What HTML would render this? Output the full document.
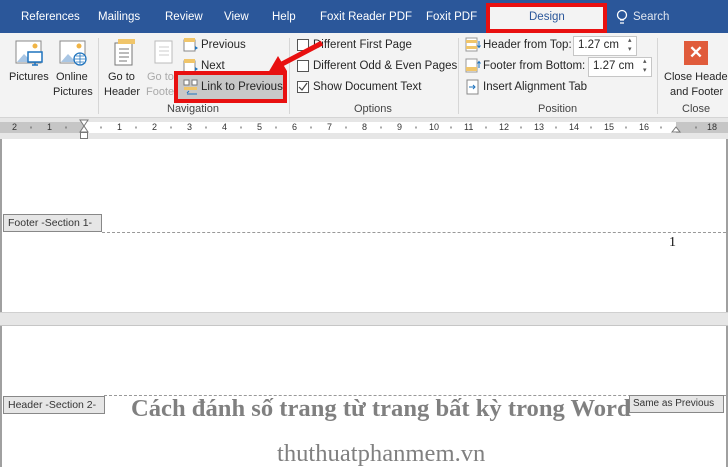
<!DOCTYPE html>
<html><head><meta charset="utf-8"><style>
*{margin:0;padding:0;box-sizing:border-box}
body{width:728px;height:467px;overflow:hidden;position:relative;background:#fff;font-family:"Liberation Sans",sans-serif;font-size:11px;color:#262626}
.a{position:absolute;white-space:nowrap}
.tab{color:#fff;font-size:11.5px;top:11px}
.lbl{color:#444;font-size:11px;top:103px}
.sep{position:absolute;top:38px;width:1px;height:76px;background:#d6d6d6}
.cb{position:absolute;width:12px;height:12px;border:1px solid #555;background:#fff}
.inp{position:absolute;height:20px;background:#fff;border:1px solid #c6c6c6;font-size:11.5px;padding:2px 4px}
.rn{position:absolute;top:122px;font-size:9px;color:#333}
.tag{position:absolute;white-space:nowrap;overflow:hidden;background:#e6e6e6;border:1px solid #888;font-size:10.5px;color:#333;padding:2px 4px;height:18px}
</style></head><body>
<div class="a" style="left:0;top:0;width:728px;height:33px;background:#2b579a"></div>
<div class="a tab" style="left:21px">References</div>
<div class="a tab" style="left:98px">Mailings</div>
<div class="a tab" style="left:165px">Review</div>
<div class="a tab" style="left:224px">View</div>
<div class="a tab" style="left:272px">Help</div>
<div class="a tab" style="left:320px">Foxit Reader PDF</div>
<div class="a tab" style="left:426px">Foxit PDF</div>
<div class="a" style="left:486px;top:3px;width:121px;height:30px;border:4px solid #e81010;background:#f3f3f3"></div>
<div class="a" style="left:529px;top:11px;color:#2b579a;font-size:11.5px">Design</div>
<svg class="a" style="left:615px;top:9px" width="14" height="18"><circle cx="7" cy="6" r="4.5" fill="none" stroke="#fff" stroke-width="1.3"/><path d="M5 11h4M5 14h4" stroke="#fff" stroke-width="1.3"/></svg>
<div class="a tab" style="left:633px;color:#e0e6f0">Search</div>

<div class="a" style="left:0;top:33px;width:728px;height:85px;background:#f3f3f3;border-bottom:1px solid #d4d4d4"></div>
<svg class="a" style="left:15px;top:40px" width="30" height="28"><rect x="1" y="1" width="25" height="22" fill="#fff" stroke="#888"/><path d="M2 22l7-8 8 8z" fill="#a9c6e4"/><circle cx="20" cy="6" r="2.5" fill="#f0b445"/><rect x="13" y="12" width="14" height="10" fill="#fff" stroke="#1e73be" stroke-width="1.5"/><path d="M17 25h6M20 22v3" stroke="#1e73be" stroke-width="1.5"/></svg>
<div class="a" style="left:9px;top:71px;font-size:11px">Pictures</div>
<svg class="a" style="left:59px;top:40px" width="30" height="28"><rect x="1" y="1" width="25" height="22" fill="#fff" stroke="#888"/><path d="M2 22l7-8 8 8z" fill="#a9c6e4"/><circle cx="20" cy="6" r="2.5" fill="#f0b445"/><circle cx="21" cy="19" r="6" fill="#fff" stroke="#1e73be" stroke-width="1.3"/><path d="M15 19h12M21 13v12M17 16h8M17 22h8" stroke="#1e73be" stroke-width=".8"/></svg>
<div class="a" style="left:56px;top:71px">Online</div>
<div class="a" style="left:53px;top:86px">Pictures</div>
<div class="sep" style="left:98px"></div>
<svg class="a" style="left:112px;top:38px" width="24" height="30"><rect x="3" y="5" width="17" height="22" fill="#fff" stroke="#777"/><rect x="6" y="1" width="17" height="5" fill="#f0c56a"/><path d="M7 11h10M7 15h10M7 19h10M7 23h8" stroke="#777"/></svg>
<div class="a" style="left:108px;top:71px">Go to</div>
<div class="a" style="left:104px;top:86px">Header</div>
<svg class="a" style="left:152px;top:38px" width="24" height="30"><rect x="3" y="3" width="17" height="22" fill="#fff" stroke="#bbb"/><path d="M7 9h10M7 13h10M7 17h10" stroke="#ccc"/></svg>
<div class="a" style="left:147px;top:71px;color:#aaa">Go to</div>
<div class="a" style="left:146px;top:86px;color:#aaa">Footer</div>
<svg class="a" style="left:183px;top:37px" width="16" height="16"><rect x="1" y="3" width="11" height="11" fill="#fff" stroke="#888"/><rect x="1" y="1" width="11" height="4" fill="#f0c56a"/><path d="M15 11l-3 -2v4z" fill="#1e73be"/></svg>
<div class="a" style="left:201px;top:39px;font-size:11.5px">Previous</div>
<svg class="a" style="left:183px;top:58px" width="16" height="16"><rect x="1" y="3" width="11" height="11" fill="#fff" stroke="#888"/><rect x="1" y="1" width="11" height="4" fill="#f0c56a"/><path d="M15 11l-3 -2v4z" fill="#1e73be"/></svg>
<div class="a" style="left:201px;top:60px;font-size:11.5px">Next</div>
<div class="a" style="left:174px;top:71px;width:113px;height:32px;border:4px solid #e81010;background:#c8c8c8"></div>
<svg class="a" style="left:183px;top:79px" width="16" height="16"><rect x="1" y="1" width="5" height="5" fill="#fff" stroke="#777"/><rect x="9" y="1" width="5" height="5" fill="#fff" stroke="#777"/><rect x="1" y="8" width="13" height="3" fill="#f0c56a"/><path d="M4 15h10M6 12l-2 2" stroke="#1e73be"/></svg>
<div class="a" style="left:201px;top:81px;font-size:11.5px">Link to Previous</div>
<div class="a lbl" style="left:167px">Navigation</div>
<div class="sep" style="left:289px"></div>
<div class="cb" style="left:297px;top:39px"></div>
<div class="a" style="left:313px;top:39px;font-size:11.5px">Different First Page</div>
<div class="cb" style="left:297px;top:60px"></div>
<div class="a" style="left:313px;top:60px;font-size:11.5px">Different Odd &amp; Even Pages</div>
<div class="cb" style="left:297px;top:81px"><svg width="10" height="10" style="position:absolute;left:0;top:0"><path d="M1 5l3 3 5-7" fill="none" stroke="#444" stroke-width="1.2"/></svg></div>
<div class="a" style="left:313px;top:81px;font-size:11.5px">Show Document Text</div>
<div class="a lbl" style="left:354px">Options</div>
<div class="sep" style="left:458px"></div>
<svg class="a" style="left:465px;top:37px" width="16" height="16"><rect x="1" y="1" width="11" height="13" fill="#fff" stroke="#999"/><rect x="1" y="3" width="11" height="3" fill="#f0c56a"/><rect x="1" y="9" width="11" height="3" fill="#f0c56a"/><path d="M14 4v6M12.5 8.5l1.5 2 1.5-2" stroke="#1e73be" fill="none"/></svg>
<div class="a" style="left:483px;top:39px;font-size:11.5px">Header from Top:</div>
<div class="inp" style="left:573px;top:36px;width:64px">1.27 cm</div>
<svg class="a" style="left:465px;top:58px" width="16" height="16"><rect x="1" y="1" width="11" height="13" fill="#fff" stroke="#999"/><rect x="1" y="9" width="11" height="4" fill="#f0c56a"/><path d="M14 10V4M12.5 5.5l1.5-2 1.5 2" stroke="#1e73be" fill="none"/></svg>
<div class="a" style="left:483px;top:60px;font-size:11.5px">Footer from Bottom:</div>
<div class="inp" style="left:588px;top:57px;width:64px">1.27 cm</div>
<div class="a" style="left:628px;top:36px;font-size:7px;color:#555;line-height:9px">▴<br>▾</div>
<div class="a" style="left:643px;top:57px;font-size:7px;color:#555;line-height:9px">▴<br>▾</div>
<svg class="a" style="left:465px;top:79px" width="16" height="16"><rect x="2" y="1" width="11" height="14" fill="#fff" stroke="#888"/><path d="M4 8h6M8 6l2 2-2 2" stroke="#1e73be" fill="none"/></svg>
<div class="a" style="left:483px;top:81px;font-size:11.5px">Insert Alignment Tab</div>
<div class="a lbl" style="left:538px">Position</div>
<div class="sep" style="left:657px"></div>
<div class="a" style="left:684px;top:41px;width:24px;height:24px;background:#e05b3b;color:#fff;font-size:17px;font-weight:bold;text-align:center;line-height:24px">✕</div>
<div class="a" style="left:664px;top:71px">Close Header</div>
<div class="a" style="left:670px;top:86px">and Footer</div>
<div class="a lbl" style="left:682px">Close</div>

<svg class="a" style="left:0;top:0" width="728" height="120"><path d="M322 43L282 64" stroke="#e81010" stroke-width="5"/><path d="M268 73l10-17 9 15z" fill="#e81010"/></svg>

<div class="a" style="left:0;top:118px;width:728px;height:21px;background:#e6e6e6"></div>
<div class="a" style="left:0;top:122px;width:84px;height:11px;background:#c6c6c6"></div>
<div class="a" style="left:84px;top:122px;width:592px;height:11px;background:#fff"></div>
<div class="a" style="left:676px;top:122px;width:52px;height:11px;background:#c6c6c6"></div>
<div class="rn" style="left:12px">2</div><div class="rn" style="left:47px">1</div>
<div class="rn" style="left:117px">1</div><div class="rn" style="left:152px">2</div><div class="rn" style="left:187px">3</div><div class="rn" style="left:222px">4</div><div class="rn" style="left:257px">5</div><div class="rn" style="left:292px">6</div><div class="rn" style="left:327px">7</div><div class="rn" style="left:362px">8</div><div class="rn" style="left:397px">9</div><div class="rn" style="left:429px">10</div><div class="rn" style="left:464px">11</div><div class="rn" style="left:499px">12</div><div class="rn" style="left:534px">13</div><div class="rn" style="left:569px">14</div><div class="rn" style="left:604px">15</div><div class="rn" style="left:639px">16</div><div class="rn" style="left:707px">18</div>
<svg class="a" style="left:0;top:118px" width="728" height="22"><g stroke="#555" stroke-width="1">
<path d="M31 126.5v2M66 126.5v2M101 126.5v2M136 126.5v2M171 126.5v2M206 126.5v2M241 126.5v2M276 126.5v2M311 126.5v2M346 126.5v2M381 126.5v2M416 126.5v2M451 126.5v2M486 126.5v2M521 126.5v2M556 126.5v2M591 126.5v2M626 126.5v2M661 126.5v2M696 126.5v2" transform="translate(0,-118)"/></g>
<path d="M80 2h8l-4 6zM80 14h8l-4-6z" fill="#fff" stroke="#777"/><rect x="80.5" y="14.5" width="7" height="6" fill="#fff" stroke="#777"/><path d="M672 14l4-5 4 5z" fill="#fff" stroke="#777"/></svg>

<div class="a" style="left:0;top:139px;width:2px;height:328px;background:#a0a0a0"></div>
<div class="a" style="left:726px;top:139px;width:2px;height:328px;background:#a0a0a0"></div>
<div class="a" style="left:0;top:312px;width:728px;height:14px;background:#e6e6e6;border-top:1px solid #d0d0d0;border-bottom:1px solid #c6c6c6"></div>
<div class="tag" style="left:3px;top:214px;width:99px">Footer -Section 1-</div>
<div class="a" style="left:102px;top:232px;width:624px;border-top:1px dashed #999"></div>
<div class="a" style="left:669px;top:235px;font-family:'Liberation Serif',serif;font-size:14px;color:#111">1</div>
<div class="a" style="left:104px;top:395px;width:622px;border-top:1px dashed #999"></div>
<div class="tag" style="left:3px;top:396px;width:102px">Header -Section 2-</div>
<div class="a" style="left:131px;top:395px;font-family:'Liberation Serif',serif;font-weight:bold;font-size:24.6px;color:#808080">Cách đánh số trang từ trang bất kỳ trong Word</div>
<div class="tag" style="left:629px;top:395px;width:95px;font-size:10px;padding:2px 3px">Same as Previous</div>
<div class="a" style="left:277px;top:440px;font-family:'Liberation Serif',serif;font-size:24.6px;color:#808080">thuthuatphanmem.vn</div>
</body></html>
